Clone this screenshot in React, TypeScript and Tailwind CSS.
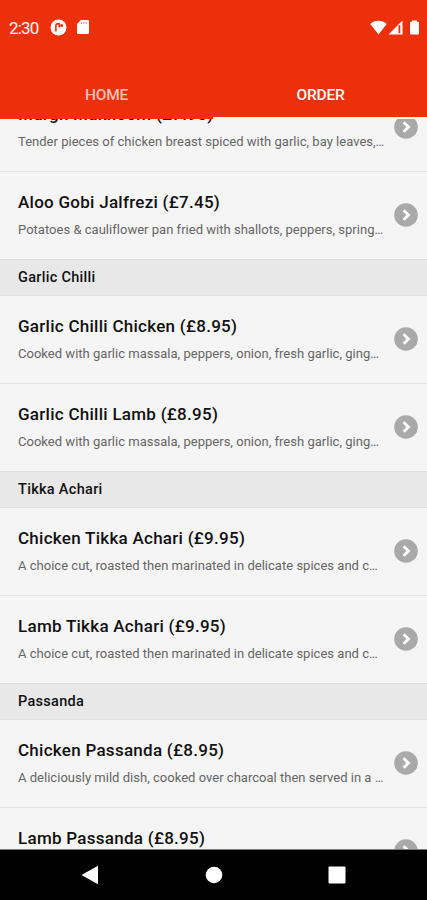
import clsx from "clsx";

interface Dish {
	name: string;
	price: string;
	description: string;
}

interface Section {
	title?: string;
	dishes: Dish[];
}

const menu: Section[] = [
	{
		dishes: [
			{
				name: "Murgh Makhoom",
				price: "£7.95",
				description: "Tender pieces of chicken breast spiced with garlic, bay leaves,…",
			},
			{
				name: "Aloo Gobi Jalfrezi",
				price: "£7.45",
				description: "Potatoes & cauliflower pan fried with shallots, peppers, spring…",
			},
		],
	},
	{
		title: "Garlic Chilli",
		dishes: [
			{
				name: "Garlic Chilli Chicken",
				price: "£8.95",
				description: "Cooked with garlic massala, peppers, onion, fresh garlic, ging…",
			},
			{
				name: "Garlic Chilli Lamb",
				price: "£8.95",
				description: "Cooked with garlic massala, peppers, onion, fresh garlic, ging…",
			},
		],
	},
	{
		title: "Tikka Achari",
		dishes: [
			{
				name: "Chicken Tikka Achari",
				price: "£9.95",
				description: "A choice cut, roasted then marinated in delicate spices and c…",
			},
			{
				name: "Lamb Tikka Achari",
				price: "£9.95",
				description: "A choice cut, roasted then marinated in delicate spices and c…",
			},
		],
	},
	{
		title: "Passanda",
		dishes: [
			{
				name: "Chicken Passanda",
				price: "£8.95",
				description: "A deliciously mild dish, cooked over charcoal then served in a …",
			},
			{
				name: "Lamb Passanda",
				price: "£8.95",
				description: "",
			},
		],
	},
];

const StatusBar = () => (
	<div className="flex h-[54px] shrink-0 items-center pl-[9px] pr-[7px] text-white">
		<span className="w-[41px] pt-[2px] text-[17px] leading-none tracking-[-0.8px]">2:30</span>
		<svg width="17" height="17" viewBox="0 0 17 17">
			<circle cx="8.5" cy="8.5" r="8" fill="#fff" />
			<path d="M5.9 12.5V6.2Q5.9 4.9 7.2 4.9H9.3V8.4" fill="none" stroke="#ec300b" strokeWidth="1.6" />
			<circle cx="11.6" cy="6.6" r="1.5" fill="#ec300b" />
		</svg>
		<svg className="ml-[9px]" width="14" height="16" viewBox="0 0 14 16">
			<path d="M5 1H12Q13 1 13 2V14Q13 15 12 15H2Q1 15 1 14V5Z" fill="#fff" />
			<path d="M5.5 3V5.2M7.9 3V5.2M10.3 3V5.2" stroke="#ec300b" strokeOpacity="0.6" strokeWidth="1" />
		</svg>
		<svg className="ml-auto" width="17" height="15" viewBox="0 0 17 15">
			<path d="M8.5 14.5L0.3 4Q3.8 0.7 8.5 0.7T16.7 4Z" fill="#fff" />
		</svg>
		<svg className="ml-px" width="15" height="15" viewBox="0 0 15 15">
			<path d="M0.5 14.5L14.5 0.5V14.5Z" fill="#fff" />
			<path d="M11.4 5.2V13.2" stroke="#ec300b" strokeWidth="1.8" />
		</svg>
		<svg className="ml-[6px]" width="11" height="15" viewBox="0 0 11 15">
			<path d="M3 0.5H8V1.8H9Q10 1.8 10 2.8V13.5Q10 14.5 9 14.5H2Q1 14.5 1 13.5V2.8Q1 1.8 2 1.8H3Z" fill="#fff" />
		</svg>
	</div>
);

const Tab = ({ label, active }: { label: string; active?: boolean }) => (
	<button
		type="button"
		className={clsx(
			"flex flex-1 items-center justify-center border-b-2 pt-[21px] text-[15.5px] font-medium tracking-[-0.2px]",
			active ? "border-white pl-px text-white" : "border-[#ec300b] text-white/70"
		)}>
		{label}
	</button>
);

const DishRow = ({ dish }: { dish: Dish }) => (
	<li className="flex h-[88px] items-center border-t border-[#e2e2e2] pl-[18px] pr-[9px]">
		<div className="min-w-0 flex-1 whitespace-nowrap">
			<h3 className="text-[17px] leading-[23px] font-medium tracking-[0.27px] text-[#111]">
				{dish.name} ({dish.price})
			</h3>
			<p className="mt-[5px] h-[21px] text-[13px] leading-[22px] tracking-[0.02px] text-[#666]">{dish.description}</p>
		</div>
		<svg className="mb-[2px] shrink-0" width="24" height="24" viewBox="0 0 24 24">
			<circle cx="12" cy="12" r="11.8" fill="#a9a9a9" />
			<path d="M9.6 7.2L14.4 12L9.6 16.8" fill="none" stroke="#fff" strokeWidth="3" />
		</svg>
	</li>
);

const NavigationBar = () => (
	<div className="flex h-[51px] shrink-0 items-center justify-between border-t border-[#777] bg-black px-[81px] pb-px">
		<svg width="18" height="20" viewBox="0 0 18 20">
			<path d="M0.5 10L17 0.8V19.2Z" fill="#fff" />
		</svg>
		<svg width="18" height="18" viewBox="0 0 18 18">
			<circle cx="9" cy="9" r="8.3" fill="#fff" />
		</svg>
		<svg width="18" height="18" viewBox="0 0 18 18">
			<rect x="0.5" y="0.5" width="17" height="17" rx="1" fill="#fff" />
		</svg>
	</div>
);

const App = () => {
	return (
		<div className="flex h-[900px] w-full flex-col overflow-hidden bg-[#f5f5f5] font-['Roboto',sans-serif]">
			<header className="z-10 flex h-[119px] shrink-0 flex-col bg-[#ec300b]">
				<StatusBar />
				<nav className="flex flex-1">
					<Tab label="HOME" />
					<Tab label="ORDER" active />
				</nav>
			</header>

			{/* Menu, scrolled under the header */}

			<main className="min-h-0 flex-1 overflow-hidden">
				<div className="-mt-9">
					{menu.map((section, index) => (
						<section key={index}>
							{section.title && (
								<h2 className="flex h-9 items-center border-t border-[#dedede] bg-[#e8e8e8] pl-[18px] text-[14.5px] font-medium tracking-[0.3px] text-[#111]">
									{section.title}
								</h2>
							)}
							<ul>
								{section.dishes.map((dish) => (
									<DishRow key={dish.name} dish={dish} />
								))}
							</ul>
						</section>
					))}
				</div>
			</main>

			<NavigationBar />
		</div>
	);
};

export default App;
